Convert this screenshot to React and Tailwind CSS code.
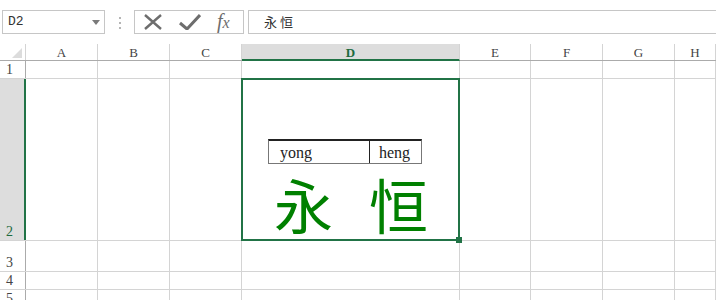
import React from "react";

const cols = ["A", "B", "C", "D", "E", "F", "G", "H"];
const colW = ["w-[72px]", "w-[72px]", "w-[72px]", "w-[218px]", "w-[71px]", "w-[72px]", "w-[72px]", "flex-1"];
const rows = [
  { n: "1", h: "h-[18px]" },
  { n: "2", h: "h-[162px]" },
  { n: "3", h: "h-[31px]" },
  { n: "4", h: "h-[18px]" },
  { n: "5", h: "h-[18px]" },
];

const serif = { fontFamily: '"Liberation Serif", "Noto Sans CJK SC", serif' };

const FormulaBar = () => (
  <div className="flex items-start h-[44px] pt-[10px] pl-[2px]">
    <div className="flex items-center justify-between w-[103px] h-[24px] border border-[#c6c6c6] pl-[5px] pr-[4px]">
      <span className="text-[13px] text-[#333]" style={{ fontFamily: '"Liberation Mono", monospace' }}>D2</span>
      <svg width="8" height="5" viewBox="0 0 8 5"><path d="M0 0h8L4 5z" fill="#7a7a7a" /></svg>
    </div>
    <div className="flex flex-col gap-[3px] ml-[14px] mt-[7px]">
      <div className="w-[2px] h-[2px] bg-[#b5b5b5]" />
      <div className="w-[2px] h-[2px] bg-[#b5b5b5]" />
      <div className="w-[2px] h-[2px] bg-[#b5b5b5]" />
    </div>
    <div className="flex items-center ml-[13px] w-[110px] h-[24px] border border-[#c6c6c6] px-[8px] gap-[16px]">
      <svg width="20" height="16" viewBox="0 0 20 16">
        <path d="M2 1L18 15M18 1L2 15" stroke="#6d6d6d" strokeWidth="2.4" />
      </svg>
      <svg width="22" height="16" viewBox="0 0 22 16">
        <path d="M1 9L8 15L21 1" stroke="#6d6d6d" strokeWidth="3" fill="none" />
      </svg>
      <span className="text-[20px] italic text-[#6d6d6d] leading-none -mt-[2px]" style={{ fontFamily: '"Liberation Serif", serif' }}>
        f<span className="text-[16px]">x</span>
      </span>
    </div>
    <div className="flex-1 ml-[4px] h-[24px] border border-[#c6c6c6] border-r-0 flex items-center pl-[15px]">
      <span className="text-[13px] text-[#333]" style={{ fontFamily: '"Noto Sans CJK SC", sans-serif' }}>永 恒</span>
    </div>
  </div>
);

const D2Content = () => (
  <div className="flex flex-col items-start pl-[25px] pt-[59px]">
    <div className="flex h-[25px] border-t-2 border-t-[#222] border-x border-b border-[#777]">
      <div className="w-[101px] border-r border-r-[#222] pl-[11px] pt-[1px] text-[16px] leading-[22px] text-[#222]" style={serif}>yong</div>
      <div className="w-[51px] pl-[9px] pt-[1px] text-[16px] leading-[22px] text-[#222]" style={serif}>heng</div>
    </div>
    <div className="flex text-[59px] leading-[72px] text-[#008000] pl-[6px] mt-[4px] gap-[36px]" style={{ fontFamily: '"Noto Sans CJK SC", sans-serif', fontWeight: 400 }}>
      <span>永</span>
      <span>恒</span>
    </div>
  </div>
);

export default function App() {
  return (
    <div className="w-[716px] h-[300px] overflow-hidden bg-white">
      <FormulaBar />
      <div className="flex h-[17px] border-b border-[#ababab]">
        <div className="w-[26px] border-r border-[#d4d4d4] relative">
          <svg className="absolute right-[3px] bottom-[2px]" width="10" height="10" viewBox="0 0 10 10"><path d="M10 0V10H0z" fill="#dcdcdc" /></svg>
        </div>
        {cols.map((c, i) => (
          <div
            key={c}
            className={`${colW[i]} ${c === "D" ? "bg-[#dddddd] text-[#1e6b3f] font-bold border-b-2 border-[#217346] -mb-px" : "text-[#444]"} border-r border-r-[#d4d4d4] text-[13px] leading-[17px] text-center`}
            style={serif}
          >
            {c}
          </div>
        ))}
      </div>
      {rows.map((r) => (
        <div key={r.n} className={`flex ${r.h} border-b border-[#d4d4d4]`}>
          <div
            className={`w-[26px] flex items-end pl-[6px] text-[14px] leading-[17px] border-r ${r.n === "2" ? "bg-[#dddddd] text-[#1e6b3f] border-r-2 border-r-[#217346]" : "text-[#444] border-r-[#ababab]"}`}
            style={serif}
          >
            {r.n}
          </div>
          {cols.map((c, i) => (
            <div key={c} className={`${colW[i]} border-r border-[#d4d4d4] ${r.n === "2" && c === "D" ? "relative" : ""}`}>
              {r.n === "2" && c === "D" && (
                <div className="absolute -left-[1px] -top-[1px] w-[219px] h-[163px] border-2 border-[#217346]">
                  <D2Content />
                  <div className="absolute -right-[4px] -bottom-[4px] w-[6px] h-[6px] bg-[#217346]" />
                </div>
              )}
            </div>
          ))}
        </div>
      ))}
    </div>
  );
}
